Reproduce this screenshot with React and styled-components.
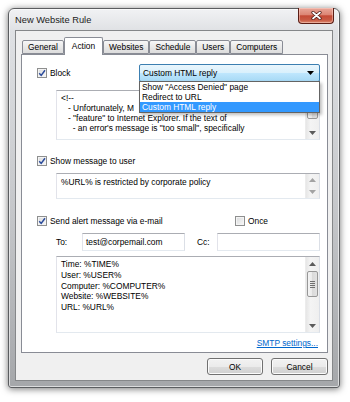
import React from 'react';
import styled, { createGlobalStyle } from 'styled-components';

const Global = createGlobalStyle`
  html, body { margin: 0; padding: 0; background: #ffffff; }
  body { font-family: "Liberation Sans", Arial, sans-serif; font-size: 8.4px; color: #000; }
  * { box-sizing: border-box; }
`;

const Page = styled.div`
  width: 350px;
  height: 402px;
  padding: 8px;
`;

const Window = styled.div`
  width: 332px;
  height: 380px;
  border: 1px solid #5b5d60;
  border-radius: 6px 6px 3px 3px;
  background: linear-gradient(to bottom, #f1f2f4 0px, #dfe1e4 22px, #c4c6c9 55%, #a5a7aa 100%);
  box-shadow: 0 1px 7px rgba(0, 0, 0, 0.55), inset 0 0 0 1px rgba(255, 255, 255, 0.6);
  padding: 0 6px 6px 6px;
  display: flex;
  flex-direction: column;
`;

const TitleBar = styled.div`
  height: 21px;
  display: flex;
  align-items: center;
`;

const TitleText = styled.span`
  font-size: 9.3px;
  color: #1b1b1b;
`;

const CloseButton = styled.div`
  margin-left: auto;
  margin-right: -1px;
  align-self: flex-start;
  margin-top: -1px;
  width: 36px;
  height: 16px;
  border: 1px solid #5a1d15;
  border-top: none;
  border-radius: 0 0 4px 4px;
  background: linear-gradient(to bottom, #e9a799 0%, #dc8574 45%, #c44a36 52%, #c85a44 80%, #dc8a70 100%);
  box-shadow: inset 0 0 0 1px rgba(255, 220, 210, 0.45);
  display: flex;
  align-items: center;
  justify-content: center;
`;

const Client = styled.div`
  flex: 1;
  background: #f0f0f0;
  border: 1px solid #858789;
  padding: 6px 4px 5px 5px;
  display: flex;
  flex-direction: column;
`;

const TabStrip = styled.div`
  height: 17px;
  display: flex;
  align-items: flex-end;
  padding-left: 1px;
  position: relative;
  z-index: 1;
`;

const Tab = styled.div`
  height: ${p => (p.$active ? 18 : 14)}px;
  margin-bottom: ${p => (p.$active ? -1 : 0)}px;
  padding: 0 ${p => (p.$active ? 7 : 5)}px ${p => (p.$active ? 2 : 0)}px;
  border: 1px solid #898c95;
  border-bottom: ${p => (p.$active ? 'none' : '1px solid #898c95')};
  border-radius: 2px 2px 0 0;
  background: ${p => (p.$active ? '#ffffff' : 'linear-gradient(to bottom, #f7f7f7, #e6e6e6 60%, #dcdcdc)')};
  display: flex;
  align-items: center;
  white-space: nowrap;
`;

const Panel = styled.div`
  height: 299px;
  border: 1px solid #898c95;
  background: #ffffff;
  padding: 9px 7px 0 15px;
  display: flex;
  flex-direction: column;
`;

const BlockRow = styled.div`
  height: 18px;
  display: flex;
  align-items: center;
  position: relative;
  z-index: 2;
`;

const CheckRow = styled.div`
  height: 14px;
  margin-top: ${p => p.$top || 0}px;
  display: flex;
  align-items: center;
`;

const CheckLabel = styled.label`
  display: flex;
  align-items: center;
  gap: 3px;
  white-space: nowrap;
`;

const Box = styled.span`
  width: 10px;
  height: 10px;
  border: 1px solid #8e8f8f;
  background: linear-gradient(135deg, #d9dadb, #f8f8f8);
  box-shadow: inset 0 0 0 1px #f4f4f4;
  display: inline-flex;
  align-items: center;
  justify-content: center;
`;

const OnceBox = styled.div`
  margin-left: auto;
  width: 85px;
`;

const Combo = styled.div`
  margin-left: auto;
  width: 181px;
  height: 18px;
  border: 1px solid #3c7fb1;
  border-radius: 2px;
  background: linear-gradient(to bottom, #eaf6fd 0%, #d9f0fc 48%, #bee6fd 52%, #a7d9f5 100%);
  display: flex;
  align-items: center;
  padding: 0 5px 0 3px;
  position: relative;
`;

const ComboText = styled.span`
  flex: 1;
`;

const DropList = styled.div`
  position: absolute;
  top: 100%;
  left: -1px;
  right: -1px;
  background: #ffffff;
  border: 1px solid #646464;
  box-shadow: 2px 2px 3px rgba(0, 0, 0, 0.25);
`;

const DropItem = styled.div`
  height: 10px;
  line-height: 10px;
  padding-left: 2px;
  white-space: nowrap;
  background: ${p => (p.$selected ? '#3399ff' : 'transparent')};
  color: ${p => (p.$selected ? '#ffffff' : '#000000')};
`;

const TextBox = styled.div`
  margin-left: 19px;
  margin-top: ${p => p.$top}px;
  height: ${p => p.$h}px;
  border: 1px solid;
  border-color: #abadb3 #dbdfe6 #e3e9ef #e2e3ea;
  background: #ffffff;
  display: flex;
`;

const TextContent = styled.div`
  flex: 1;
  min-width: 0;
  padding: ${p => p.$pt}px 4px 0 4px;
  overflow: hidden;
`;

const Line = styled.div`
  height: ${p => p.$lh}px;
  line-height: ${p => p.$lh}px;
  white-space: pre;
`;

const ScrollBar = styled.div`
  width: 14px;
  display: flex;
  flex-direction: column;
  background: linear-gradient(to right, #e6e6e6, #f4f4f4 35%, #efefef);
  border-left: 1px solid #ececec;
`;

const ScrollBtn = styled.div`
  height: ${p => p.$h}px;
  display: flex;
  align-items: center;
  justify-content: center;
`;

const ScrollSpace = styled.div`
  flex: 1;
`;

const Thumb = styled.div`
  margin: 1px 1px 0 1px;
  height: ${p => p.$h}px;
  border: 1px solid #979797;
  border-radius: 2px;
  background: linear-gradient(to right, #f4f4f4, #e9e9e9 50%, #dadada 50%, #e2e2e2);
  display: flex;
  flex-direction: column;
  align-items: center;
  justify-content: center;
  gap: 1px;
`;

const Grip = styled.span`
  width: 5px;
  height: 1px;
  background: #707070;
`;

const FieldRow = styled.div`
  margin-left: 19px;
  margin-top: 5px;
  height: 18px;
  display: flex;
  align-items: center;
`;

const FieldLabel = styled.span`
  width: ${p => p.$w}px;
  margin-left: ${p => p.$ml || 0}px;
`;

const Input = styled.div`
  height: 18px;
  width: ${p => (p.$w ? `${p.$w}px` : 'auto')};
  flex: ${p => (p.$w ? 'none' : '1')};
  border: 1px solid;
  border-color: #abadb3 #dbdfe6 #e3e9ef #e2e3ea;
  background: #ffffff;
  padding-left: 3px;
  display: flex;
  align-items: center;
`;

const Link = styled.a`
  margin-top: 4px;
  margin-right: 2px;
  align-self: flex-end;
  color: #0066cc;
  text-decoration: underline;
  line-height: 12px;
`;

const ButtonRow = styled.div`
  margin-top: 5px;
  height: 17px;
  display: flex;
  justify-content: flex-end;
  gap: 8px;
`;

const Button = styled.div`
  width: ${p => p.$w}px;
  height: 17px;
  border: 1px solid #707070;
  border-radius: 3px;
  background: linear-gradient(to bottom, #f2f2f2 0%, #ebebeb 50%, #dddddd 51%, #cfcfcf 100%);
  box-shadow: inset 0 0 0 1px #fbfbfb;
  display: flex;
  align-items: center;
  justify-content: center;
`;

const Arrow = ({ up, dim }) => (
  <svg width="7" height="4" viewBox="0 0 7 4">
    <path d={up ? 'M0 4 L3.5 0 L7 4 Z' : 'M0 0 L7 0 L3.5 4 Z'} fill={dim ? '#a3a3a3' : '#5c5c5c'} />
  </svg>
);

const Check = ({ checked }) => (
  <Box>
    {checked && (
      <svg width="8" height="8" viewBox="0 0 8 8">
        <path d="M1.2 4.2 L3.2 6.4 L7 1.2" fill="none" stroke="#2b4b9b" strokeWidth="1.5" />
      </svg>
    )}
  </Box>
);

const tabs = ['General', 'Action', 'Websites', 'Schedule', 'Users', 'Computers'];

const htmlLines = [
  '<!--',
  '   - Unfortunately, M',
  '   - "feature" to Internet Explorer. If the text of',
  '     - an error\'s message is "too small", specifically',
];

const mailLines = [
  'Time: %TIME%',
  'User: %USER%',
  'Computer: %COMPUTER%',
  'Website: %WEBSITE%',
  'URL: %URL%',
];

export default function App() {
  return (
    <Page>
      <Global />
      <Window>
        <TitleBar>
          <TitleText>New Website Rule</TitleText>
          <CloseButton>
            <svg width="11" height="9" viewBox="0 0 11 9">
              <path d="M2 1.5 L9 7.5 M9 1.5 L2 7.5" stroke="#4a1a14" strokeWidth="3.2" strokeLinecap="round" />
              <path d="M2 1.5 L9 7.5 M9 1.5 L2 7.5" stroke="#ffffff" strokeWidth="1.7" strokeLinecap="round" />
            </svg>
          </CloseButton>
        </TitleBar>
        <Client>
          <TabStrip>
            {tabs.map(t => (
              <Tab key={t} $active={t === 'Action'}>{t}</Tab>
            ))}
          </TabStrip>
          <Panel>
            <BlockRow>
              <CheckLabel><Check checked />Block</CheckLabel>
              <Combo>
                <ComboText>Custom HTML reply</ComboText>
                <svg width="7" height="4" viewBox="0 0 7 4"><path d="M0 0 L7 0 L3.5 4 Z" fill="#000" /></svg>
                <DropList>
                  <DropItem>Show "Access Denied" page</DropItem>
                  <DropItem>Redirect to URL</DropItem>
                  <DropItem $selected>Custom HTML reply</DropItem>
                </DropList>
              </Combo>
            </BlockRow>
            <TextBox $top={8} $h={50}>
              <TextContent $pt={2}>
                {htmlLines.map((l, i) => <Line key={i} $lh={10}>{l}</Line>)}
              </TextContent>
              <ScrollBar>
                <ScrollBtn $h={13}><Arrow up /></ScrollBtn>
                <Thumb $h={14} />
                <ScrollSpace />
                <ScrollBtn $h={13}><Arrow /></ScrollBtn>
              </ScrollBar>
            </TextBox>

            <CheckRow $top={14}>
              <CheckLabel><Check checked />Show message to user</CheckLabel>
            </CheckRow>
            <TextBox $top={5} $h={26}>
              <TextContent $pt={3}>
                <Line $lh={10}>%URL% is restricted by corporate policy</Line>
              </TextContent>
              <ScrollBar>
                <ScrollBtn $h={12}><Arrow up dim /></ScrollBtn>
                <ScrollBtn $h={12}><Arrow dim /></ScrollBtn>
              </ScrollBar>
            </TextBox>

            <CheckRow $top={15}>
              <CheckLabel><Check checked />Send alert message via e-mail</CheckLabel>
              <OnceBox>
                <CheckLabel><Check />Once</CheckLabel>
              </OnceBox>
            </CheckRow>
            <FieldRow>
              <FieldLabel $w={26}>To:</FieldLabel>
              <Input $w={103}>test@corpemail.com</Input>
              <FieldLabel $w={20} $ml={12}>Cc:</FieldLabel>
              <Input />
            </FieldRow>
            <TextBox $top={5} $h={77}>
              <TextContent $pt={2}>
                {mailLines.map((l, i) => <Line key={i} $lh={10.8}>{l}</Line>)}
              </TextContent>
              <ScrollBar>
                <ScrollBtn $h={13}><Arrow up /></ScrollBtn>
                <Thumb $h={26}>
                  <Grip /><Grip /><Grip /><Grip />
                </Thumb>
                <ScrollSpace />
                <ScrollBtn $h={13}><Arrow /></ScrollBtn>
              </ScrollBar>
            </TextBox>
            <Link>SMTP settings...</Link>
          </Panel>
          <ButtonRow>
            <Button $w={56}>OK</Button>
            <Button $w={57}>Cancel</Button>
          </ButtonRow>
        </Client>
      </Window>
    </Page>
  );
}
